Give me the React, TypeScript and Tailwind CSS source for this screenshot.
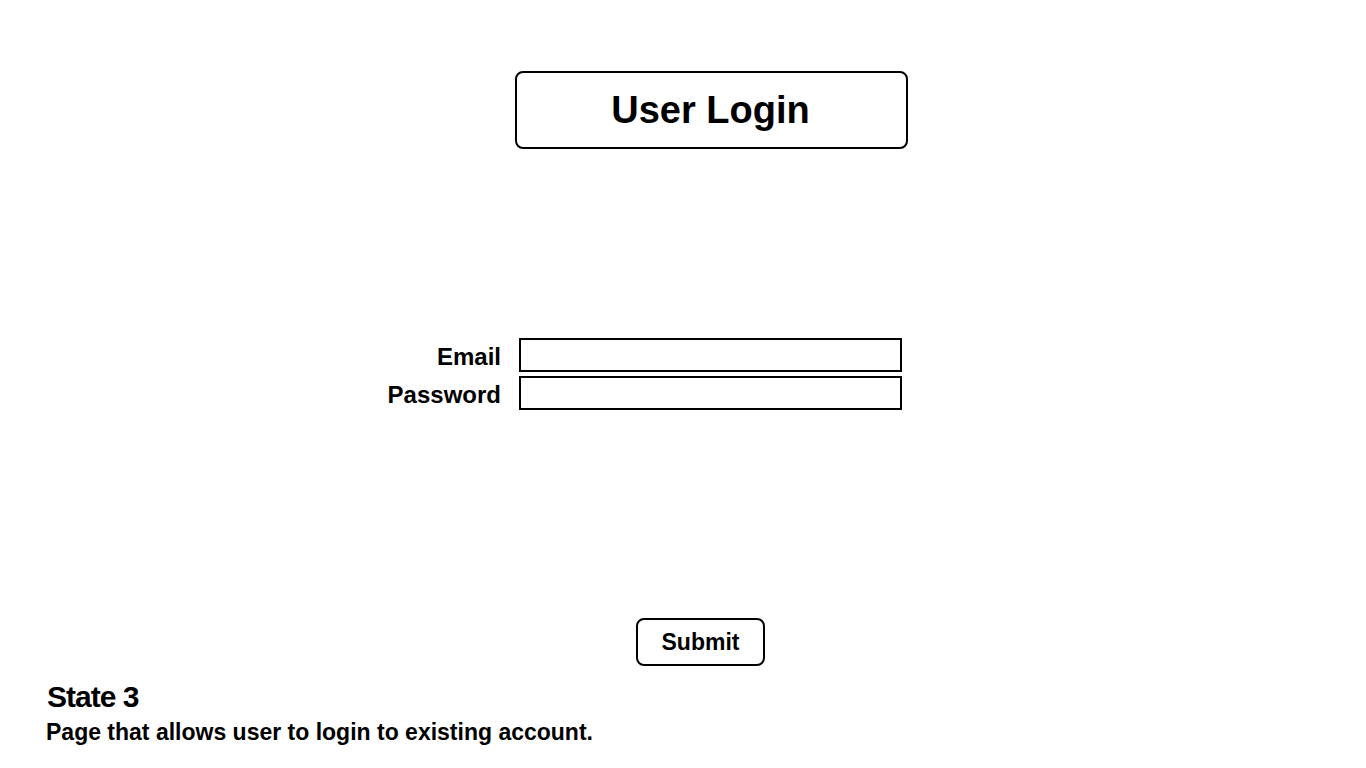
import React from "react";

export default function App() {
  return (
    <div className="min-h-screen w-full bg-white text-black font-['Liberation_Sans',Arial,sans-serif]">
      <div className="pt-[71px] pl-[515px]">
        <div className="w-[393px] h-[78px] border-2 border-black rounded-[8px] flex items-center justify-center">
          <h1 className="text-[38px] font-bold leading-none pr-[2px]">User Login</h1>
        </div>
      </div>

      <form className="mt-[189px] flex flex-col gap-[4px]" onSubmit={e => e.preventDefault()}>
        <div className="flex items-center">
          <label className="w-[501px] text-right text-[24px] font-bold leading-none pt-[4px]">Email</label>
          <input type="email" className="ml-[18px] w-[383px] h-[34px] border-2 border-black outline-none" />
        </div>
        <div className="flex items-center">
          <label className="w-[501px] text-right text-[24px] font-bold leading-none pt-[4px]">Password</label>
          <input type="password" className="ml-[18px] w-[383px] h-[34px] border-2 border-black outline-none" />
        </div>

        <div className="mt-[204px] pl-[636px]">
          <button type="submit" className="w-[129px] h-[48px] border-2 border-black rounded-[8px] text-[23px] font-bold leading-none">
            Submit
          </button>
        </div>
      </form>

      <div className="pl-[46px] mt-[16px]">
        <h2 className="text-[30px] font-bold leading-none tracking-[-1px] pl-[1px]">State 3</h2>
        <p className="text-[23px] font-bold leading-none mt-[9px]">Page that allows user to login to existing account.</p>
      </div>
    </div>
  );
}
